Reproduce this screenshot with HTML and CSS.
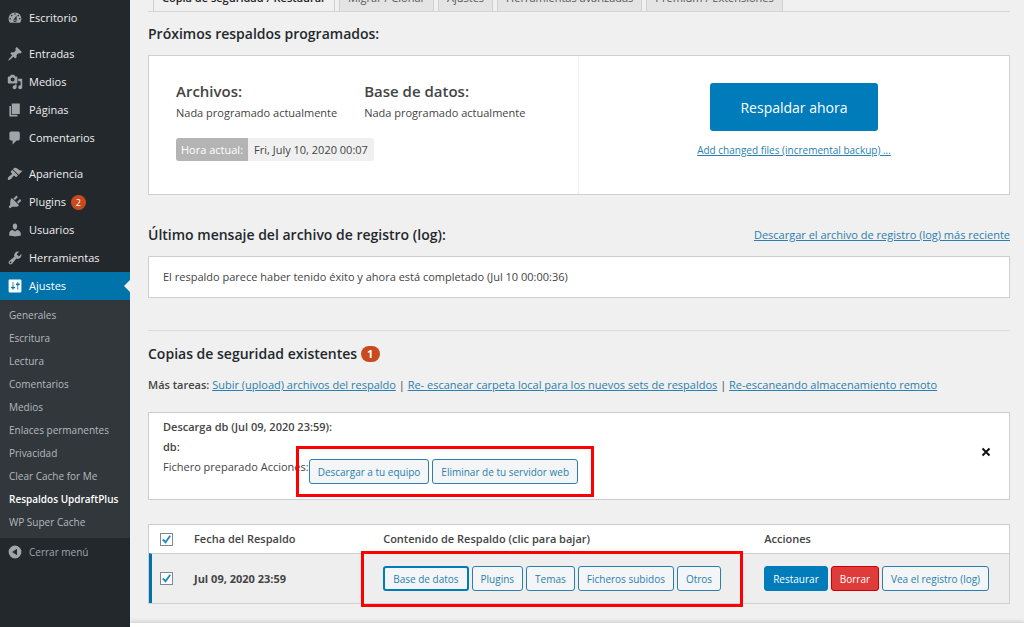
FILE: index.html
```html
<!DOCTYPE html>
<html lang="es">
<head>
    <meta charset="UTF-8">
    <meta name="viewport" content="width=device-width, initial-scale=1.0">
    <title>Respaldos UpdraftPlus</title>
    <link rel="stylesheet" href="styles.css">
</head>
<body>
    <div class="wrapper">
        <nav class="sidebar">
            <ul class="menu">
                <li><a href="#"><svg viewBox="0 0 20 20"><path fill-rule="evenodd" d="M3.76 16h12.48c1.1-1.37 1.76-3.11 1.76-5 0-4.42-3.58-8-8-8s-8 3.58-8 8c0 1.89.66 3.63 1.76 5zM10 4c.55 0 1 .45 1 1s-.45 1-1 1-1-.45-1-1 .45-1 1-1zM6 6c.55 0 1 .45 1 1s-.45 1-1 1-1-.45-1-1 .45-1 1-1zm8 0c.55 0 1 .45 1 1s-.45 1-1 1-1-.45-1-1 .45-1 1-1zm-5.37 5.55L12 7v6c0 1.1-.9 2-2 2s-2-.9-2-2c0-.57.24-1.08.63-1.45zM4 10c.55 0 1 .45 1 1s-.45 1-1 1-1-.45-1-1 .45-1 1-1zm12 0c.55 0 1 .45 1 1s-.45 1-1 1-1-.45-1-1 .45-1 1-1zm-5 3c0-.55-.45-1-1-1s-1 .45-1 1 .45 1 1 1 1-.45 1-1z"/></svg>Escritorio</a></li>
                <li class="separator"></li>
                <li><a href="#"><svg viewBox="0 0 20 20"><path d="M10.44 3.02l1.82-1.82 6.36 6.35-1.83 1.82c-1.05-.68-2.48-.57-3.41.36l-.75.75c-.92.93-1.04 2.35-.35 3.41l-1.83 1.82-2.41-2.41-2.8 2.79c-.42.42-3.38 2.71-3.8 2.29s1.86-3.39 2.28-3.81l2.79-2.79L4.1 9.36l1.83-1.82c1.05.69 2.48.57 3.4-.36l.75-.75c.93-.92 1.05-2.35.36-3.41z"/></svg>Entradas</a></li>
                <li><a href="#"><svg viewBox="0 0 20 20"><path fill-rule="evenodd" d="M13 11V4c0-.55-.45-1-1-1h-1.67L9 1H5L3.67 3H2c-.55 0-1 .45-1 1v7c0 .55.45 1 1 1h10c.55 0 1-.45 1-1zM7 4.5c1.38 0 2.5 1.12 2.5 2.5S8.38 9.5 7 9.5 4.5 8.38 4.5 7 5.62 4.5 7 4.5zM14 6h5v10.5c0 1.38-1.12 2.5-2.5 2.5S14 17.88 14 16.5s1.12-2.5 2.5-2.5c.17 0 .34.02.5.05V9h-3V6zm-4 8.05V13h2v3.5c0 1.38-1.12 2.5-2.5 2.5S7 17.88 7 16.5 8.12 14 9.5 14c.17 0 .34.02.5.05z"/></svg>Medios</a></li>
                <li><a href="#"><svg viewBox="0 0 20 20"><path d="M6 15V2h10v13H6zm-1 1h8v2H3V5h2v11z"/></svg>Páginas</a></li>
                <li><a href="#"><svg viewBox="0 0 20 20"><path d="M5 2h9c1.1 0 2 .9 2 2v7c0 1.1-.9 2-2 2h-2l-5 5v-5H5c-1.1 0-2-.9-2-2V4c0-1.1.9-2 2-2z"/></svg>Comentarios</a></li>
                <li class="separator"></li>
                <li><a href="#"><svg viewBox="0 0 20 20"><path d="M14.48 11.06L7.41 3.99l1.5-1.5c.5-.56 2.3-.47 3.51.32 1.21.8 1.43 1.28 2.91 2.1 1.18.64 2.45 1.26 4.45.85zm-.71.71L6.7 4.7 4.93 6.47c-.39.39-.39 1.02 0 1.41l1.06 1.06c.39.39.39 1.03 0 1.42-.6.6-1.43 1.11-2.21 1.69-.35.26-.7.53-1.01.84C1.43 14.23.4 16.08 1.4 17.07c.99 1 2.84-.03 4.18-1.36.31-.31.58-.66.85-1.02.57-.78 1.08-1.61 1.69-2.21.39-.39 1.02-.39 1.41 0l1.06 1.06c.39.39 1.02.39 1.41 0z"/></svg>Apariencia</a></li>
                <li><a href="#"><svg viewBox="0 0 20 20"><path d="M13.11 4.36L9.87 7.6 8 5.73l3.24-3.24c.35-.34 1.05-.2 1.56.32.52.51.66 1.21.31 1.55zm-8 1.77l.91-1.12 9.01 9.01-1.19.84c-.71.71-2.63 1.16-3.82 1.16H6.14L4.9 17.26c-.59.59-1.54.59-2.12 0-.59-.58-.59-1.53 0-2.12l1.24-1.24v-3.88c0-1.13.4-3.19 1.09-3.89zm7.26 3.97l3.24-3.24c.34-.35 1.04-.21 1.55.31.52.51.66 1.21.31 1.55l-3.24 3.25z"/></svg>Plugins <span class="count">2</span></a></li>
                <li><a href="#"><svg viewBox="0 0 20 20"><path d="M10 9.25c-2.27 0-2.73-3.44-2.73-3.44C7 4.02 7.82 2 9.97 2c2.16 0 2.98 2.02 2.71 3.81 0 0-.41 3.44-2.68 3.44zm0 2.57L12.72 10c2.39 0 4.52 2.33 4.52 4.53v2.49s-3.65 1.13-7.24 1.13c-3.65 0-7.24-1.13-7.24-1.13v-2.49c0-2.25 1.94-4.48 4.47-4.48z"/></svg>Usuarios</a></li>
                <li><a href="#"><svg viewBox="0 0 20 20"><path fill-rule="evenodd" d="M16.68 9.77c-1.34 1.34-3.3 1.67-4.95.99l-5.41 6.52c-.99.99-2.59.99-3.58 0s-.99-2.59 0-3.57l6.52-5.42c-.68-1.65-.35-3.61.99-4.95 1.28-1.28 3.12-1.62 4.72-1.06l-2.89 2.89 2.82 2.82 2.86-2.87c.53 1.58.18 3.39-1.08 4.65zM3.81 16.21c.4.39 1.04.39 1.43 0 .4-.4.4-1.04 0-1.43-.39-.4-1.03-.4-1.43 0-.39.39-.39 1.03 0 1.43z"/></svg>Herramientas</a></li>
                <li class="current"><a href="#"><svg viewBox="0 0 20 20"><path fill-rule="evenodd" d="M18 17V3c0-.55-.45-1-1-1H3c-.55 0-1 .45-1 1v14c0 .55.45 1 1 1h14c.55 0 1-.45 1-1zM8 11h1c.55 0 1 .45 1 1s-.45 1-1 1H8v1.5c0 .28-.22.5-.5.5s-.5-.22-.5-.5V13H6c-.55 0-1-.45-1-1s.45-1 1-1h1V5.5c0-.28.22-.5.5-.5s.5.22.5.5V11zm5-2h-1c-.55 0-1-.45-1-1s.45-1 1-1h1V5.5c0-.28.22-.5.5-.5s.5.22.5.5V7h1c.55 0 1 .45 1 1s-.45 1-1 1h-1v5.5c0 .28-.22.5-.5.5s-.5-.22-.5-.5V9z"/></svg>Ajustes</a></li>
            </ul>
            <ul class="submenu">
                <li><a href="#">Generales</a></li>
                <li><a href="#">Escritura</a></li>
                <li><a href="#">Lectura</a></li>
                <li><a href="#">Comentarios</a></li>
                <li><a href="#">Medios</a></li>
                <li><a href="#">Enlaces permanentes</a></li>
                <li><a href="#">Privacidad</a></li>
                <li><a href="#">Clear Cache for Me</a></li>
                <li><a href="#" class="active">Respaldos UpdraftPlus</a></li>
                <li><a href="#">WP Super Cache</a></li>
            </ul>
            <button type="button" class="collapse-btn"><svg viewBox="0 0 20 20"><path fill-rule="evenodd" d="M10 2a8 8 0 1 0 0 16 8 8 0 0 0 0-16zM12.5 6v8L6.5 10z"/></svg>Cerrar menú</button>
        </nav>

        <div class="page">
            <main class="content">
                <div class="tabs">
                    <a href="#" class="tab active">Copia de seguridad / Restaurar</a>
                    <a href="#" class="tab">Migrar / Clonar</a>
                    <a href="#" class="tab">Ajustes</a>
                    <a href="#" class="tab">Herramientas avanzadas</a>
                    <a href="#" class="tab">Premium / Extensiones</a>
                </div>

                <h2>Próximos respaldos programados:</h2>
                <section class="box schedule">
                    <div class="schedule-info">
                        <div class="schedule-columns">
                            <div>
                                <h3>Archivos:</h3>
                                <p>Nada programado actualmente</p>
                            </div>
                            <div>
                                <h3>Base de datos:</h3>
                                <p>Nada programado actualmente</p>
                            </div>
                        </div>
                        <div class="time-now">
                            <span class="time-label">Hora actual:</span>
                            <span class="time-value">Fri, July 10, 2020 00:07</span>
                        </div>
                    </div>
                    <div class="schedule-action">
                        <button type="button" class="backup-btn">Respaldar ahora</button>
                        <a href="#">Add changed files (incremental backup) ...</a>
                    </div>
                </section>

                <div class="log-header">
                    <h2>Último mensaje del archivo de registro (log):</h2>
                    <a href="#">Descargar el archivo de registro (log) más reciente</a>
                </div>
                <section class="box log-message">El respaldo parece haber tenido éxito y ahora está completado (Jul 10 00:00:36)</section>

                <hr>

                <h2>Copias de seguridad existentes <span class="count">1</span></h2>
                <p class="tasks"><strong>Más tareas:</strong> <a href="#">Subir (upload) archivos del respaldo</a> | <a href="#">Re- escanear carpeta local para los nuevos sets de respaldos</a> | <a href="#">Re-escaneando almacenamiento remoto</a></p>

                <section class="box download">
                    <div class="download-info">
                        <strong>Descarga db (Jul 09, 2020 23:59):</strong>
                        <strong>db:</strong>
                        <div class="download-row">
                            <span>Fichero preparado Acciones:</span>
                            <div class="btn-group highlight">
                                <button type="button" class="btn">Descargar a tu equipo</button>
                                <button type="button" class="btn">Eliminar de tu servidor web</button>
                            </div>
                        </div>
                    </div>
                    <button type="button" class="close-btn" aria-label="Cerrar"><svg viewBox="0 0 10 10"><path d="M1.5 1.5l7 7M8.5 1.5l-7 7"/></svg></button>
                </section>

                <table class="backups">
                    <thead>
                        <tr>
                            <th class="check"><input type="checkbox" aria-label="Seleccionar todos" checked></th>
                            <th class="date">Fecha del Respaldo</th>
                            <th class="data">Contenido de Respaldo (clic para bajar)</th>
                            <th>Acciones</th>
                        </tr>
                    </thead>
                    <tbody>
                        <tr>
                            <td class="check"><input type="checkbox" aria-label="Jul 09, 2020 23:59" checked></td>
                            <td class="date">Jul 09, 2020 23:59</td>
                            <td class="data">
                                <div class="btn-group highlight wide">
                                    <button type="button" class="btn focused">Base de datos</button>
                                    <button type="button" class="btn">Plugins</button>
                                    <button type="button" class="btn">Temas</button>
                                    <button type="button" class="btn">Ficheros subidos</button>
                                    <button type="button" class="btn">Otros</button>
                                </div>
                            </td>
                            <td>
                                <div class="btn-group">
                                    <button type="button" class="btn primary">Restaurar</button>
                                    <button type="button" class="btn danger">Borrar</button>
                                    <button type="button" class="btn">Vea el registro (log)</button>
                                </div>
                            </td>
                        </tr>
                    </tbody>
                </table>
            </main>
            <div class="bottom-bar"></div>
        </div>
    </div>
</body>
</html>
```
FILE: styles.css
```css
/* General Styles */
* {
    box-sizing: border-box;
}

body {
    margin: 0;
    font-family: "Open Sans", "Noto Sans", sans-serif;
    font-size: 11px;
    line-height: 16px;
    color: #444;
    background: #f0f0f0;
}

a {
    color: #2a7fae;
}

h2, h3, p, ul {
    margin: 0;
    padding: 0;
}

ul {
    list-style: none;
}

button {
    font-family: inherit;
    cursor: pointer;
}

strong {
    font-weight: 600;
}

.wrapper {
    display: flex;
    min-height: 100vh;
}

/* Sidebar */
.sidebar {
    width: 130px;
    flex-shrink: 0;
    padding-top: 4px;
    background: #23282d;
}

.separator {
    height: 8px;
}

.menu a,
.collapse-btn {
    display: flex;
    align-items: center;
    width: 100%;
    height: 28px;
    padding: 0 7px;
    color: #eee;
    font-weight: 500;
    text-decoration: none;
}

.menu svg,
.collapse-btn svg {
    width: 16px;
    height: 16px;
    margin-right: 6px;
    fill: #a0a5aa;
}

.menu .current a {
    position: relative;
    background: #0073aa;
    color: #fff;
}

.menu .current svg {
    fill: #fff;
}

/* Arrow that points at the current page */
.menu .current a::after {
    content: "";
    position: absolute;
    right: 0;
    top: 8px;
    border: 6px solid transparent;
    border-left-width: 0;
    border-right-color: #f0f0f0;
}

.count {
    display: inline-block;
    min-width: 15px;
    margin-left: 5px;
    border-radius: 9px;
    background: #ca4a1f;
    color: #fff;
    font-size: 9px;
    line-height: 15px;
    text-align: center;
}

.submenu {
    padding: 4px 0;
    background: #32373c;
}

.submenu a {
    display: block;
    padding-left: 9px;
    color: #b4b9be;
    font-size: 10px;
    line-height: 23px;
    text-decoration: none;
    white-space: nowrap;
}

.submenu .active {
    color: #fff;
    font-weight: 600;
}

.collapse-btn {
    border: none;
    background: none;
    color: #a0a5aa;
    font-size: 10px;
    font-weight: 400;
}

/* Content */
.page {
    flex: 1;
    min-width: 0;
    display: flex;
    flex-direction: column;
}

.content {
    padding: 0 14px 19px 18px;
}

.bottom-bar {
    flex: 1;
    background: #fff;
    box-shadow: 0 -1px 4px rgba(0, 0, 0, 0.18);
}

.tabs {
    display: flex;
    align-items: flex-end;
    gap: 4px;
    height: 12px;
    padding-left: 5px;
    overflow: hidden;
    border-bottom: 1px solid #d5d5d5;
}

.tab {
    padding: 4px 8px 5px;
    border: 1px solid #d0d0d0;
    border-bottom: none;
    background: #e4e4e4;
    color: #555;
    font-size: 11px;
    font-weight: 500;
    text-decoration: none;
    white-space: nowrap;
}

.tab.active {
    background: #f0f0f0;
    color: #222;
    font-weight: 600;
}

h2 {
    color: #23282d;
    font-size: 14px;
    font-weight: 600;
    line-height: 20px;
}

.tabs + h2 {
    margin: 12px 0 11px;
}

.box {
    border: 1px solid #ccd0d4;
    background: #fff;
}

.schedule {
    display: grid;
    grid-template-columns: 1fr 1fr;
    min-height: 140px;
}

.schedule-info {
    padding: 23px 27px;
    border-right: 1px solid #eee;
}

.schedule-columns {
    display: flex;
    gap: 27px;
}

h3 {
    margin-bottom: 2px;
    color: #444;
    font-size: 15px;
    font-weight: 600;
    line-height: 24px;
}

.time-now {
    display: inline-flex;
    margin-top: 17px;
    border-radius: 3px;
    overflow: hidden;
    background: #f0f0f0;
    line-height: 23px;
}

.time-label {
    padding: 0 5px;
    background: #b4b4b4;
    color: #fff;
}

.time-value {
    padding: 0 6px;
}

.schedule-action {
    display: flex;
    flex-direction: column;
    align-items: center;
    padding-top: 27px;
    font-size: 10px;
}

.backup-btn {
    height: 48px;
    margin-bottom: 11px;
    padding: 0 30px;
    border: none;
    border-radius: 3px;
    background: #007cba;
    color: #fff;
    font-size: 14px;
}

.log-header {
    display: flex;
    justify-content: space-between;
    align-items: center;
    margin: 30px 0 11px;
}

.log-message {
    padding: 12px 14px;
}

hr {
    height: 1px;
    margin: 32px 0 13px;
    border: none;
    background: #ddd;
}

h2 .count {
    min-width: 19px;
    margin-left: 0;
    font-size: 11px;
    font-weight: 700;
    line-height: 16px;
    vertical-align: 1px;
}

.tasks {
    margin: 13px 0 19px;
}

.download {
    display: flex;
    justify-content: space-between;
    align-items: center;
    padding: 6px 18px 15px 14px;
}

.download-info strong {
    display: block;
    margin-bottom: 4px;
}

.download-row {
    display: flex;
}

.btn-group {
    display: flex;
    gap: 3px;
}

.btn {
    height: 25px;
    padding: 0 8px;
    border: 1px solid #2a7fae;
    border-radius: 3px;
    background: #f3f5f6;
    color: #2a7fae;
    font-size: 10px;
    white-space: nowrap;
}

.btn.focused {
    border: 2px solid #007cba;
}

.btn.primary {
    border-color: #007cba;
    background: #007cba;
    color: #fff;
    font-weight: 500;
}

.btn.danger {
    border-color: #c00;
    background: #e03b3b;
    color: #fff;
    font-weight: 500;
}

/* Red frame drawn over the page around a button group */
.highlight {
    position: relative;
}

.highlight::after {
    content: "";
    position: absolute;
    inset: -13px -16px -13px -13px;
    border: 3px solid #f00;
    pointer-events: none;
}

.highlight.wide::after {
    inset: -15px -22px -16px -22px;
}

.close-btn {
    padding: 0;
    border: none;
    background: none;
    line-height: 0;
}

.close-btn svg {
    width: 10px;
    height: 10px;
    fill: none;
    stroke: #111;
    stroke-width: 2;
}

/* Backups table */
.backups {
    width: 100%;
    margin-top: 24px;
    border: 1px solid #ccd0d4;
    border-collapse: separate;
    border-spacing: 0;
    background: #fff;
}

.backups th,
.backups td {
    height: 28px;
    padding: 0;
    text-align: left;
    font-weight: 600;
}

.backups td {
    height: 50px;
    background: #eee;
    border-top: 1px solid #ccd0d4;
}

.backups .check {
    width: 45px;
    padding-left: 11px;
}

.backups td.check {
    padding-left: 8px;
    border-left: 3px solid #0073aa;
}

.backups .date {
    width: 22%;
}

.backups td.date {
    font-weight: 700;
}

.backups .data {
    width: 381px;
}

.backups .btn-group {
    width: max-content;
}

input[type="checkbox"] {
    appearance: none;
    display: block;
    width: 13px;
    height: 13px;
    margin: 0;
    border: 1px solid #7e8993;
    background: #fff url("data:image/svg+xml,%3Csvg xmlns='http://www.w3.org/2000/svg' viewBox='0 0 12 12'%3E%3Cpath d='M2 6l3 3 5-7' fill='none' stroke='%231e8cbe' stroke-width='2'/%3E%3C/svg%3E") center / 11px no-repeat;
}
```
